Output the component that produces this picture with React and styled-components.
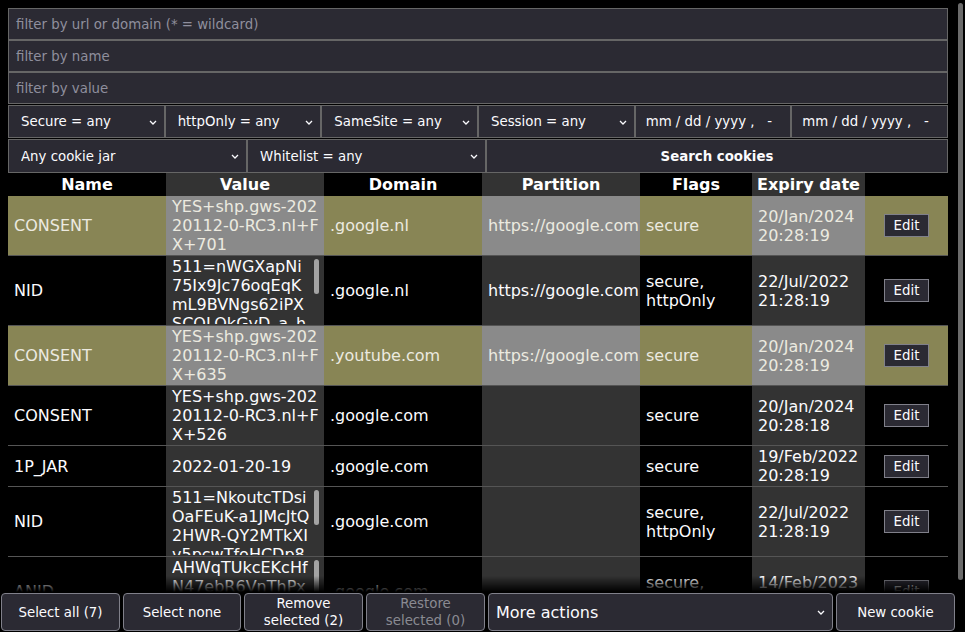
import styled, { createGlobalStyle } from 'styled-components';

const GlobalStyle = createGlobalStyle`
  html, body {
    background: #000;
    overflow: hidden;
  }
  body {
    margin: 8px;
    font-family: "DejaVu Sans", sans-serif;
    color: #fbfbfe;
  }
`;

const Page = styled.div`
  width: 940px;
  padding-bottom: 60px;
`;

const Filters = styled.div`
  display: flex;
  flex-direction: column;
`;

const TextFilter = styled.input`
  box-sizing: border-box;
  height: 32px;
  width: 100%;
  margin: 0;
  padding: 0 7px;
  background: #2b2a33;
  border: 1px solid #666;
  color: #fbfbfe;
  font: 13.333px "DejaVu Sans", sans-serif;
  outline: none;

  &::placeholder {
    color: #8f8f9d;
  }
`;

const ControlRow = styled.div`
  display: grid;
  grid-template-columns: ${({ $cols }) => $cols};
  height: ${({ $h }) => $h}px;
  margin-top: 1px;
`;

const SelectBox = styled.label`
  position: relative;
  display: flex;
  align-items: center;
  box-sizing: border-box;
  background: #2b2a33;
  border: 1px solid #666;
  border-radius: ${({ $round }) => ($round ? '4px' : '0')};
  border-color: ${({ $round }) => ($round ? '#80808a' : '#666')};
`;

const NativeSelect = styled.select`
  appearance: none;
  width: 100%;
  height: 100%;
  margin: 0;
  padding: 0 24px 0 ${({ $pad }) => $pad}px;
  background: transparent;
  border: 0;
  color: #fbfbfe;
  font: ${({ $size }) => $size}px "DejaVu Sans", sans-serif;
  outline: none;
`;

const Chevron = styled.svg`
  position: absolute;
  right: 7px;
  top: 50%;
  margin-top: -2px;
  pointer-events: none;
`;

const DateBox = styled.div`
  display: flex;
  align-items: center;
  box-sizing: border-box;
  padding-left: 10px;
  background: #2b2a33;
  border: 1px solid #666;
  color: #fbfbfe;
  font-size: 13.333px;
  white-space: pre;
`;

const SearchButton = styled.button`
  margin: 0;
  background: #2b2a33;
  border: 1px solid #666;
  color: #fbfbfe;
  font: bold 13.333px "DejaVu Sans", sans-serif;
`;

const Table = styled.table`
  width: 940px;
  border-collapse: collapse;
  table-layout: fixed;
  font-size: 16px;
  line-height: 19px;
  color: #fbfbfe;
`;

const HeadCell = styled.th`
  height: 23px;
  padding: 0;
  font-weight: bold;
  text-align: center;
  color: #fff;
  background: ${({ $shade }) => ($shade ? '#333' : '#000')};
`;

const Row = styled.tr`
  & > td {
    border-bottom: 1px solid #555;
    background: ${({ $selected }) => ($selected ? '#888555' : '#000')};
    color: ${({ $selected }) => ($selected ? '#eceae0' : '#fbfbfe')};
  }
  & > td:nth-child(even) {
    background: ${({ $selected }) => ($selected ? '#8a8a8a' : '#333')};
  }
`;

const Cell = styled.td`
  padding: 1px 1px 1px 6px;
  vertical-align: middle;
  overflow: hidden;
`;

const ActionCell = styled.td`
  padding: 1px 0;
  vertical-align: middle;
  text-align: center;
`;

const Value = styled.div`
  word-break: break-all;
`;

const ScrollValue = styled.div`
  position: relative;
  height: 67px;
  overflow: hidden;
  padding-right: 13px;
  word-break: break-all;
`;

const ScrollThumb = styled.span`
  position: absolute;
  top: 2px;
  right: 4px;
  width: 5px;
  height: 35px;
  border-radius: 3px;
  background: #a3a3a3;
`;

const EditButton = styled.button`
  margin: 0;
  padding: 3px 9px;
  background: #2b2a33;
  border: 1px solid #80808a;
  color: #fbfbfe;
  font: 13.333px "DejaVu Sans", sans-serif;
`;

const ActionBar = styled.div`
  position: fixed;
  left: 0;
  bottom: 0;
  width: 956px;
  box-sizing: border-box;
  display: grid;
  grid-template-columns: 119px 118px 119px 119px 345px 1fr;
  gap: 3px;
  height: 40px;
  padding: 1px;
  background: #000;

  &::before {
    content: '';
    position: absolute;
    left: 0;
    right: 0;
    bottom: 100%;
    height: 16px;
    background: linear-gradient(to bottom, rgba(0, 0, 0, 0), #000);
  }
`;

const BarButton = styled.button`
  margin: 0;
  padding: 0 4px;
  background: #2b2a33;
  border: 1px solid #80808a;
  border-radius: 4px;
  color: ${({ disabled }) => (disabled ? '#8a8a92' : '#fbfbfe')};
  font: 13.333px "DejaVu Sans", sans-serif;
  line-height: 17px;
`;

const PageScrollbar = styled.div`
  position: fixed;
  top: 0;
  right: 0;
  bottom: 0;
  width: 9px;
  background: #000;

  &::after {
    content: '';
    position: absolute;
    top: 3px;
    left: 2px;
    width: 5px;
    height: 577px;
    border-radius: 3px;
    background: #6b6b6b;
  }
`;

const Arrow = () => (
  <Chevron width="8" height="5" viewBox="0 0 8 5">
    <path d="M1 1 L4 4 L7 1" fill="none" stroke="#fbfbfe" strokeWidth="1.3" />
  </Chevron>
);

const Select = ({ label, size = 13.333, pad = 12, round }) => (
  <SelectBox $round={round}>
    <NativeSelect $size={size} $pad={pad} defaultValue={label}>
      <option>{label}</option>
    </NativeSelect>
    <Arrow />
  </SelectBox>
);

const columns = [
  ['Name', 158],
  ['Value', 158],
  ['Domain', 158],
  ['Partition', 158],
  ['Flags', 112],
  ['Expiry date', 113],
  ['', 83],
];

const cookies = [
  {
    id: 1,
    name: 'CONSENT',
    value: 'YES+shp.gws-20220112-0-RC3.nl+FX+701',
    domain: '.google.nl',
    partition: 'https://google.com',
    flags: 'secure',
    expiry: '20/Jan/2024 20:28:19',
    selected: true,
  },
  {
    id: 2,
    name: 'NID',
    value: '511=nWGXapNi75Ix9Jc76oqEqKmL9BVNgs62iPXSCOLOkGvD_a_hQ3kZr8fTbW2',
    domain: '.google.nl',
    partition: 'https://google.com',
    flags: 'secure, httpOnly',
    expiry: '22/Jul/2022 21:28:19',
    long: true,
  },
  {
    id: 3,
    name: 'CONSENT',
    value: 'YES+shp.gws-20220112-0-RC3.nl+FX+635',
    domain: '.youtube.com',
    partition: 'https://google.com',
    flags: 'secure',
    expiry: '20/Jan/2024 20:28:19',
    selected: true,
  },
  {
    id: 4,
    name: 'CONSENT',
    value: 'YES+shp.gws-20220112-0-RC3.nl+FX+526',
    domain: '.google.com',
    partition: '',
    flags: 'secure',
    expiry: '20/Jan/2024 20:28:18',
  },
  {
    id: 5,
    name: '1P_JAR',
    value: '2022-01-20-19',
    domain: '.google.com',
    partition: '',
    flags: 'secure',
    expiry: '19/Feb/2022 20:28:19',
  },
  {
    id: 6,
    name: 'NID',
    value: '511=NkoutcTDsiOaFEuK-a1JMcJtQ2HWR-QY2MTkXIv5pcwTfoHCDp8sLq0RzW',
    domain: '.google.com',
    partition: '',
    flags: 'secure, httpOnly',
    expiry: '22/Jul/2022 21:28:19',
    long: true,
  },
  {
    id: 7,
    name: 'ANID',
    value: 'AHWqTUkcEKcHfN47ebR6VnThPx2LmQ8sKd0yZr4VbN1cT',
    domain: '.google.com',
    partition: '',
    flags: 'secure, httpOnly',
    expiry: '14/Feb/2023 20:28:19',
    long: true,
  },
];

export default function App() {
  return (
    <Page>
      <GlobalStyle />
      <Filters>
        <TextFilter placeholder="filter by url or domain (* = wildcard)" />
        <TextFilter placeholder="filter by name" />
        <TextFilter placeholder="filter by value" />
        <ControlRow $cols="repeat(6, 1fr)" $h={33}>
          <Select label="Secure = any" />
          <Select label="httpOnly = any" />
          <Select label="SameSite = any" />
          <Select label="Session = any" />
          <DateBox>{'mm / dd / yyyy ,   -'}</DateBox>
          <DateBox>{'mm / dd / yyyy ,   -'}</DateBox>
        </ControlRow>
        <ControlRow $cols="239px 239px 1fr" $h={34}>
          <Select label="Any cookie jar" />
          <Select label="Whitelist = any" />
          <SearchButton>Search cookies</SearchButton>
        </ControlRow>
      </Filters>

      <Table>
        <colgroup>
          {columns.map(([name, w], i) => (
            <col key={i} style={{ width: w }} />
          ))}
        </colgroup>
        <thead>
          <tr>
            {columns.map(([name], i) => (
              <HeadCell key={i} $shade={i % 2 === 1}>
                {name}
              </HeadCell>
            ))}
          </tr>
        </thead>
        <tbody>
          {cookies.map((c) => (
            <Row key={c.id} $selected={c.selected}>
              <Cell>{c.name}</Cell>
              <Cell>
                {c.long ? (
                  <ScrollValue>
                    {c.value}
                    <ScrollThumb />
                  </ScrollValue>
                ) : (
                  <Value>{c.value}</Value>
                )}
              </Cell>
              <Cell>{c.domain}</Cell>
              <Cell>{c.partition}</Cell>
              <Cell>{c.flags}</Cell>
              <Cell>{c.expiry}</Cell>
              <ActionCell>
                <EditButton>Edit</EditButton>
              </ActionCell>
            </Row>
          ))}
        </tbody>
      </Table>

      <ActionBar>
        <BarButton>Select all (7)</BarButton>
        <BarButton>Select none</BarButton>
        <BarButton>
          Remove
          <br />
          selected (2)
        </BarButton>
        <BarButton disabled>
          Restore
          <br />
          selected (0)
        </BarButton>
        <Select label="More actions" size={16} pad={7} round />
        <BarButton>New cookie</BarButton>
      </ActionBar>
      <PageScrollbar />
    </Page>
  );
}
